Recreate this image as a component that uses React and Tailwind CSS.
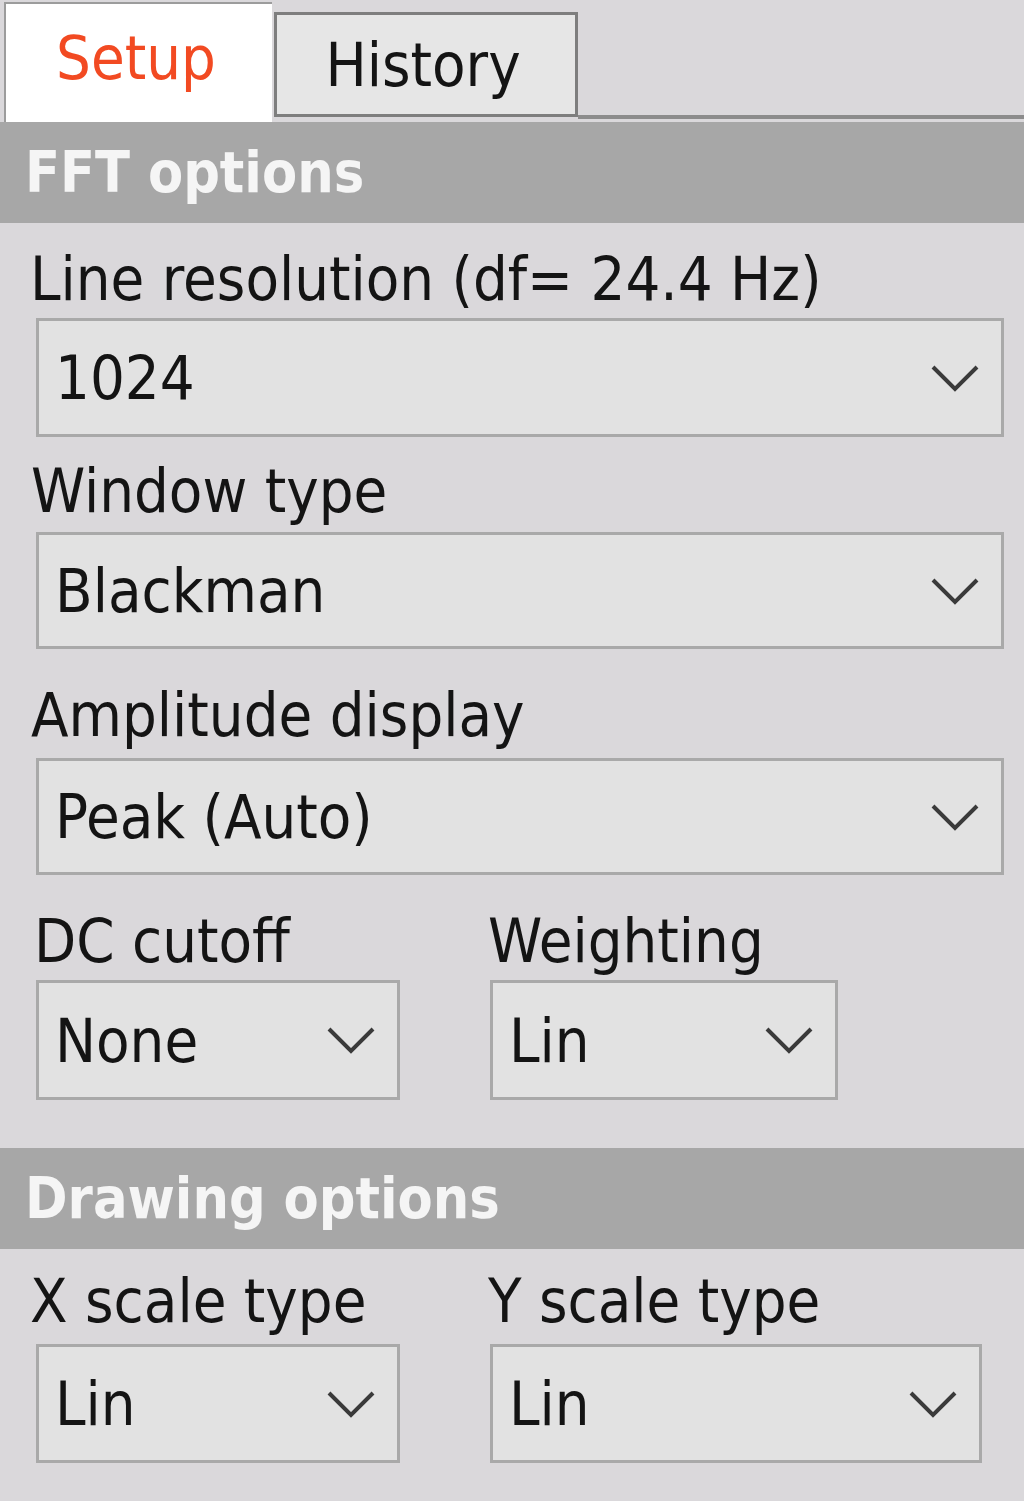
import React from "react";

const Chevron = () => (
  <svg width="48" height="28" viewBox="0 0 48 28" className="shrink-0">
    <polyline points="2,3 24,25 46,3" fill="none" stroke="#3a3a3a" strokeWidth="4" />
  </svg>
);

const Select = ({ value, className = "" }) => (
  <div
    className={`flex items-center justify-between border-[3px] border-[#a9a9a9] bg-[#e2e2e2] pl-[16px] pr-[22px] ${className}`}
  >
    <span className="text-[61px] leading-none">{value}</span>
    <Chevron />
  </div>
);

const Label = ({ children, className = "" }) => (
  <div className={`text-[61px] leading-none whitespace-nowrap ${className}`}>{children}</div>
);

const Header = ({ title, className = "" }) => (
  <div className={`h-[101px] bg-[#a7a7a7] flex items-center pl-[25px] ${className}`}>
    <span className="text-[57px] font-bold leading-none text-[#f5f5f5]">{title}</span>
  </div>
);

export default function App() {
  return (
    <div className="w-[1024px] h-[1501px] overflow-hidden bg-[#dad8db] text-[#141414] font-['DejaVu_Sans_Condensed','Liberation_Sans',sans-serif]">
      {/* tabs */}
      <div className="flex h-[122px] pl-[4px]">
        <div className="mt-[2px] w-[268px] bg-white border-l-[2px] border-t-[2px] border-[#9c9c9c] flex items-center justify-center pb-[12px] pr-[6px]">
          <span className="text-[61px] leading-none text-[#f24a22]">Setup</span>
        </div>
        <div className="mt-[12px] h-[105px] w-[304px] ml-[2px] bg-[#e6e6e6] border-[3px] border-[#7e7e7e] flex items-center justify-center pr-[6px]">
          <span className="text-[61px] leading-none">History</span>
        </div>
        <div className="flex-1 h-[119px] border-b-[4px] border-[#8c8c8c]"></div>
      </div>

      <Header title="FFT options" className="h-[100px]" />

      <div className="pl-[28px]">
        <Label className="mt-[25px] pl-[2px]">Line resolution (df= 24.4 Hz)</Label>
        <Select value="1024" className="mt-[9px] ml-[8px] w-[968px] h-[119px]" />

        <Label className="mt-[23px] pl-[3px]">Window type</Label>
        <Select value="Blackman" className="mt-[11px] ml-[8px] w-[968px] h-[117px]" />

        <Label className="mt-[35px] pl-[3px]">Amplitude display</Label>
        <Select value="Peak (Auto)" className="mt-[13px] ml-[8px] w-[968px] h-[117px]" />

        <div className="flex mt-[35px]">
          <div className="w-[460px]">
            <Label className="pl-[6px]">DC cutoff</Label>
            <Select value="None" className="mt-[9px] ml-[8px] w-[364px] h-[120px]" />
          </div>
          <div>
            <Label>Weighting</Label>
            <Select value="Lin" className="mt-[9px] ml-[2px] w-[348px] h-[120px]" />
          </div>
        </div>
      </div>

      <Header title="Drawing options" className="mt-[48px]" />

      <div className="pl-[28px] flex mt-[21px]">
        <div className="w-[460px]">
          <Label className="pl-[2px]">X scale type</Label>
          <Select value="Lin" className="mt-[13px] ml-[8px] w-[364px] h-[119px]" />
        </div>
        <div>
          <Label>Y scale type</Label>
          <Select value="Lin" className="mt-[13px] ml-[2px] w-[492px] h-[119px]" />
        </div>
      </div>
    </div>
  );
}
